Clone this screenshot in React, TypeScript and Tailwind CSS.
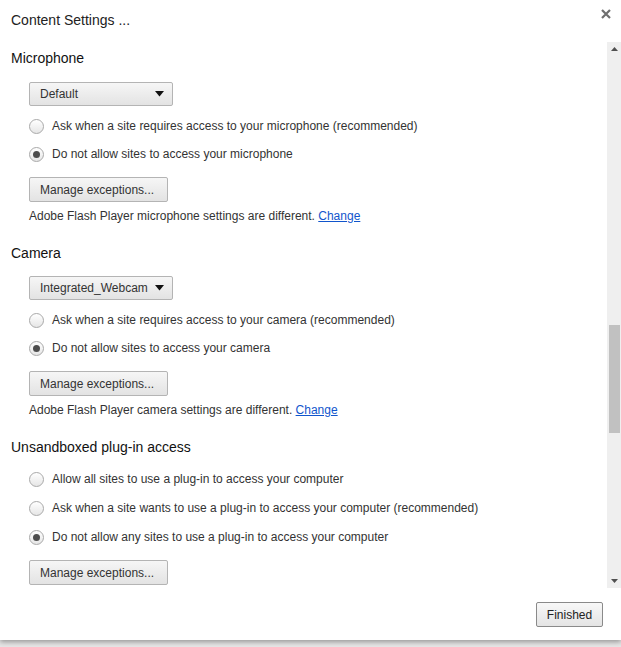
import React from "react";

type Opt = { label: string; checked?: boolean };

type Section = {
  title: string;
  select?: string;
  options: Opt[];
  note?: string;
};

const sections: Section[] = [
  {
    title: "Microphone",
    select: "Default",
    options: [
      { label: "Ask when a site requires access to your microphone (recommended)" },
      { label: "Do not allow sites to access your microphone", checked: true },
    ],
    note: "Adobe Flash Player microphone settings are different.",
  },
  {
    title: "Camera",
    select: "Integrated_Webcam",
    options: [
      { label: "Ask when a site requires access to your camera (recommended)" },
      { label: "Do not allow sites to access your camera", checked: true },
    ],
    note: "Adobe Flash Player camera settings are different.",
  },
  {
    title: "Unsandboxed plug-in access",
    options: [
      { label: "Allow all sites to use a plug-in to access your computer" },
      { label: "Ask when a site wants to use a plug-in to access your computer (recommended)" },
      { label: "Do not allow any sites to use a plug-in to access your computer", checked: true },
    ],
  },
];

const Radio = ({ checked }: { checked?: boolean }) => (
  <span className="flex h-[15px] w-[15px] shrink-0 items-center justify-center rounded-full border border-[#a9a9a9] bg-gradient-to-b from-[#ffffff] to-[#e6e6e6]">
    {checked && <span className="h-[7px] w-[7px] rounded-full bg-[#4d4d4d]" />}
  </span>
);

const Select = ({ value }: { value: string }) => (
  <div className="flex h-[24px] w-[144px] items-center rounded-[2px] border border-[#b4b4b4] bg-gradient-to-b from-[#f6f6f6] to-[#e3e3e3] pl-[10px] pr-[8px]">
    <span className="flex-1 whitespace-nowrap text-[12px] text-[#333]">{value}</span>
    <svg width="9" height="6" viewBox="0 0 9 6" className="ml-[4px] shrink-0">
      <path d="M0 0h9L4.5 5.5z" fill="#111" />
    </svg>
  </div>
);

const ManageButton = () => (
  <button className="flex h-[25px] w-[139px] items-center rounded-[2px] border border-[#b4b4b4] bg-gradient-to-b from-[#f6f6f6] to-[#e3e3e3] pl-[10px] text-[12px] text-[#333]">
    Manage exceptions...
  </button>
);

export default function App() {
  return (
    <div className="flex h-[647px] w-[621px] flex-col bg-[#e6e6e6] font-['Liberation_Sans',Arial,sans-serif]">
      <div className="flex h-[640px] flex-col bg-white shadow-[0_2px_5px_rgba(0,0,0,0.35)]">
        {/* header */}
        <div className="flex h-[42px] items-start justify-between">
          <h1 className="ml-[11px] mt-[11px] text-[14px] leading-[18px] text-[#222]">Content Settings ...</h1>
          <svg width="10" height="10" viewBox="0 0 10 10" className="mr-[10px] mt-[9px]">
            <path d="M1 1L9 9M9 1L1 9" stroke="#6e6e6e" strokeWidth="2.2" />
          </svg>
        </div>

        {/* scroll area */}
        <div className="flex h-[546px]">
          <div className="flex-1 overflow-hidden pt-[6px]">
            {sections.map((s, si) => (
              <div key={s.title} className={si > 0 ? "mt-[19px]" : ""}>
                <h2 className="ml-[11px] text-[14px] leading-[20px] text-[#111]">{s.title}</h2>
                <div className="pl-[29px]">
                  {s.select && (
                    <div className={si === 0 ? "mt-[14px]" : "mt-[13px]"}>
                      <Select value={s.select} />
                    </div>
                  )}
                  {s.options.map((o, oi) => (
                    <div
                      key={o.label}
                      className={`flex h-[20px] items-center gap-[8px] whitespace-nowrap text-[12px] text-[#333] ${
                        oi === 0 ? (s.select ? "mt-[10px]" : "mt-[12px]") : s.select ? "mt-[8px]" : "mt-[9px]"
                      }`}
                    >
                      <Radio checked={o.checked} />
                      <span>{o.label}</span>
                    </div>
                  ))}
                  <div className="mt-[13px]">
                    <ManageButton />
                  </div>
                  {s.note && (
                    <p className="mt-[6px] text-[12px] leading-[16px] text-[#333]">
                      {s.note} <a className="text-[#1155cc] underline">Change</a>
                    </p>
                  )}
                </div>
              </div>
            ))}
          </div>

          {/* scrollbar */}
          <div className="flex w-[14px] flex-col bg-[#efefef]">
            <div className="flex h-[14px] items-center justify-center">
              <svg width="7" height="4" viewBox="0 0 7 4">
                <path d="M0 4h7L3.5 0z" fill="#505050" />
              </svg>
            </div>
            <div className="ml-[2px] mr-[1px] mt-[269px] h-[108px] bg-[#c1c1c1]" />
            <div className="flex-1" />
            <div className="flex h-[14px] items-center justify-center">
              <svg width="7" height="4" viewBox="0 0 7 4">
                <path d="M0 0h7L3.5 4z" fill="#505050" />
              </svg>
            </div>
          </div>
        </div>

        {/* footer */}
        <div className="flex flex-1 items-start justify-end pr-[18px] pt-[14px]">
          <button className="h-[25px] w-[67px] rounded-[2px] border border-[#8a8a8a] bg-gradient-to-b from-[#f8f8f8] to-[#e4e4e4] text-[12px] text-[#222]">
            Finished
          </button>
        </div>
      </div>
    </div>
  );
}
